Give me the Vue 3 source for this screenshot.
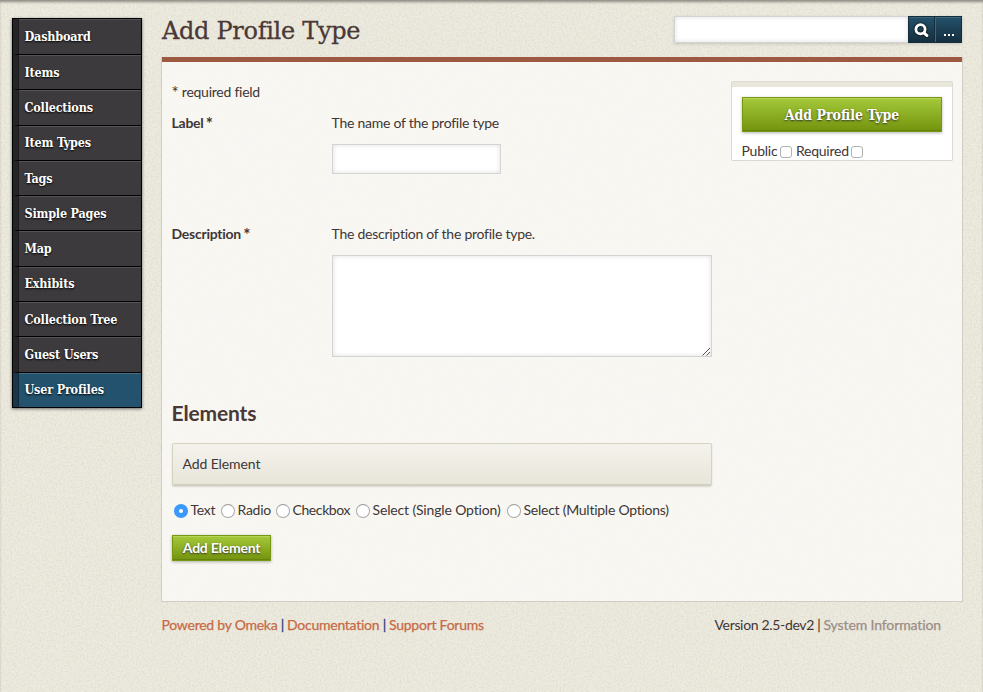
<script setup>
import { ref } from 'vue'

const nav = ['Dashboard', 'Items', 'Collections', 'Item Types', 'Tags', 'Simple Pages', 'Map', 'Exhibits', 'Collection Tree', 'Guest Users', 'User Profiles']
const current = 'User Profiles'
const kinds = [
  { label: 'Text', width: 47 },
  { label: 'Radio', width: 55 },
  { label: 'Checkbox', width: 80 },
  { label: 'Select (Single Option)', width: 151 },
  { label: 'Select (Multiple Options)', width: 170 },
]
const kind = ref('Text')
</script>

<template>
  <div class="page">
    <svg class="grain" aria-hidden="true">
      <filter id="paper">
        <feTurbulence type="fractalNoise" baseFrequency="0.55" numOctaves="2" seed="4" />
        <feColorMatrix values="0 0 0 0 0.4  0 0 0 0 0.38  0 0 0 0 0.3  1.6 0 0 0 -0.6" />
      </filter>
      <rect width="100%" height="100%" filter="url(#paper)" />
    </svg>
    <nav class="side">
      <a v-for="n in nav" :key="n" :class="['item', { current: n === current }]"><span>{{ n }}</span></a>
    </nav>
    <div class="main">
      <header class="head">
        <h1>Add Profile Type</h1>
        <form class="search" @submit.prevent>
          <input type="text" class="field query" />
          <button class="sbtn">
            <svg width="15" height="15" viewBox="0 0 15 15">
              <circle cx="6.5" cy="6.2" r="4.6" fill="none" stroke="#fff" stroke-width="2.8" />
              <path d="M10 9.8 L12.9 12.5" stroke="#fff" stroke-width="3" stroke-linecap="round" />
            </svg>
          </button>
          <button class="sbtn more"><i></i><i></i><i></i></button>
        </form>
      </header>
      <section class="content">
        <div class="left">
          <p class="req"><span class="star">*</span> required field</p>
          <div class="row row1">
            <label>Label <span class="star">*</span></label>
            <div>
              <p>The name of the profile type</p>
              <input type="text" class="field name" />
            </div>
          </div>
          <div class="row row2">
            <label class="desc">Description <span class="star">*</span></label>
            <div>
              <p>The description of the profile type.</p>
              <div class="field area">
                <svg width="9" height="9" viewBox="0 0 9 9">
                  <path d="M0.5 8.5 L8 1 M4.5 8.5 L8 5" stroke="#555" stroke-width="1" fill="none" />
                </svg>
              </div>
            </div>
          </div>
          <h2>Elements</h2>
          <div class="bar">Add Element</div>
          <div class="kinds">
            <label v-for="(k, i) in kinds" :key="k.label" :class="'k' + i" :style="{ width: k.width + 'px' }">
              <span :class="['radio', { on: kind === k.label }]" @click="kind = k.label"></span><span>{{ k.label }}</span>
            </label>
          </div>
          <button class="green small">Add Element</button>
        </div>
        <aside class="save">
          <button class="green big">Add Profile Type</button>
          <div class="checks">
            <span class="pub">Public</span><span class="box"></span><span class="rq">Required</span><span class="box"></span>
          </div>
        </aside>
      </section>
      <footer class="foot">
        <div class="links"><a class="f1">Powered by Omeka</a><b>|</b><a class="f2">Documentation</a><b>|</b><a class="f3">Support Forums</a></div>
        <div class="ver"><span class="f4">Version 2.5-dev2</span><b class="red">|</b><a class="f5">System Information</a></div>
      </footer>
    </div>
  </div>
</template>

<style>
body { background: #e9e7da; }
</style>

<style scoped>
* { box-sizing: border-box; }
.page {
  position: relative; display: flex; width: 983px; height: 692px; overflow: hidden;
  background: #edebdf; box-shadow: inset 0 3px 3px -1px rgba(0, 0, 0, .42);
  font: 14px/20px Lato, sans-serif; letter-spacing: -.25px; color: #403636; white-space: nowrap;
}
.grain { position: absolute; left: 0; top: 0; width: 983px; height: 692px; opacity: .25; pointer-events: none; }
p, h1, h2 { margin: 0; }
button { padding: 0; font: inherit; letter-spacing: inherit; }

.side {
  position: relative; width: 130px; height: 390px; margin: 18px 0 0 12px; flex: none;
  display: flex; flex-direction: column; border: 1px solid #000;
  box-shadow: 0 1px 3px rgba(0, 0, 0, .55);
}
.item {
  flex: 1; display: flex; align-items: center; padding: 1px 0 0 6.5px;
  border-left: 5px solid #252427; border-bottom: 1px solid #000;
  background: conic-gradient(#3f3d40 25%, #39373a 0 50%, #3f3d40 0 75%, #39373a 0) 0 0 / 2px 2px;
  box-shadow: inset 1px 0 #1d1c1f, inset 0 1px #555355;
  color: #fff; font: bold 12.5px/20px "DejaVu Serif Condensed", "DejaVu Serif", serif;
  font-stretch: condensed; letter-spacing: -.2px; text-shadow: 0 1px 2px #000;
}
.item:first-child { flex-grow: 1.02; }
.item:last-child { border-bottom: 0; }
.item.current {
  background: conic-gradient(#265671 25%, #214f69 0 50%, #265671 0 75%, #214f69 0) 0 0 / 2px 2px;
  border-left-color: #1b3648; box-shadow: inset 1px 0 #10293a, inset 0 1px #477087;
}

.main { position: relative; margin-left: 19px; width: 802px; }
.head { height: 57px; display: flex; justify-content: space-between; padding: 16px 1px 0 1px; }
h1 {
  font: 24px/30px "DejaVu Serif", serif;
  color: #4a3837; letter-spacing: -.3px; -webkit-text-stroke: .3px #4a3837;
}
.search { display: flex; height: 27px; box-shadow: 0 1px 3px rgba(0, 0, 0, .15); }
.field {
  display: block; background: #fff; border: 1px solid #d4d4d4; border-radius: 0; outline: 0;
  box-shadow: inset 0 0 5px rgba(0, 0, 0, .13);
}
.query { width: 234px; height: 27px; border-right: 0; }
.sbtn {
  width: 27px; height: 27px; display: flex; align-items: center; justify-content: center;
  border: 1px solid #142d3d; background: linear-gradient(#245169, #142f3f);
  box-shadow: inset 0 1px #3a6278;
}
.sbtn svg { margin-top: 1px; filter: drop-shadow(0 0 1px #000); }
.more { gap: 2px; padding: 10px 0 0 1px; border-left: 0; box-shadow: inset 1px 1px #3f677c; }
.more i { width: 2px; height: 2px; background: #fff; }

.content {
  height: 545px; border: 1px solid #cfcdc4; border-top: 0; margin-right: 0;
  background: linear-gradient(#9d5a40, #9d5a40) 0 0 / 100% 5px no-repeat, rgba(249, 248, 245, .88);
  display: flex; justify-content: space-between; padding: 5px 9px 0 9px;
}
.left { width: 541px; display: flex; flex-direction: column; padding-left: 1px; }
.req { margin: 20px 0 0 -.5px; }
.star { font-size: 17px; line-height: 14px; vertical-align: -2px; }
.row { display: grid; grid-template-columns: 160px 1fr; }
.row label { font-weight: bold; margin-left: -.5px; }
.row label .star { margin-left: -1px; }
.row p { margin-left: -.5px; }
.row1 { margin-top: 11px; height: 111px; }
.name { width: 169px; height: 30px; margin-top: 11px; }
.area { display: flex; width: 380px; height: 102px; margin-top: 11px; align-items: flex-end; justify-content: flex-end; }
.row2 { height: 133px; }
h2 { margin: 42px 0 0 -.5px; font: bold 21px/28px Lato, sans-serif; color: #4a3837; letter-spacing: -.15px; }
.bar {
  width: 540px; height: 43px; margin-top: 16px; padding-left: 9.5px; line-height: 40px; letter-spacing: -.1px;
  border: 1px solid #d6d3bf; border-bottom: 2px solid #d1cfbd; border-radius: 2px;
  background: linear-gradient(#f4f2ec, #e8e6da); box-shadow: 0 1px 2px rgba(0, 0, 0, .13);
}
.kinds { display: flex; margin-top: 14px; padding-left: 2px; height: 20px; }
.kinds label { display: flex; align-items: center; gap: 2.5px; flex: none; }
.k2 { letter-spacing: -.4px; }
.k3 { letter-spacing: -.15px; }
.radio {
  width: 14px; height: 14px; margin-top: 2px; flex: none; border-radius: 50%;
  border: 1px solid #aaa; border-top-color: #999; background: #fff;
}
.radio.on { border: 5px solid #3b99fc; }
.green {
  border: 1px solid #769614; background: linear-gradient(#a4c93a, #73930c); color: #fff;
  box-shadow: inset 0 1px #b8d458, inset 0 -1px #64840c, 0 1px 3px rgba(0, 0, 0, .3);
  text-shadow: 0 1px 2px #333; font-weight: bold;
}
.small { width: 99px; height: 26px; margin-top: 15px; }
.save {
  width: 222px; height: 80px; margin: 19px 0 0; padding: 10px 10px 0; border: 1px solid #dad9d5;
  border-radius: 2px; background: #fff; border-top: 0;
  box-shadow: inset 0 1px #deddd3, inset 0 6px #e9e7da;
}
.big {
  display: block; width: 200px; height: 35px; margin-top: 6px; letter-spacing: 0;
  font: bold 14px/30px "DejaVu Serif Condensed", "DejaVu Serif", serif; font-stretch: condensed;
}
.checks { display: flex; align-items: center; margin: 9px 0 0 -.5px; height: 20px; }
.pub { width: 38.5px; }
.rq { width: 55px; }
.box { width: 12px; height: 12px; margin: 2px 4px 0 0; border: 1px solid #b0b0b0; border-radius: 3px; background: #fff; }

.foot { display: flex; justify-content: space-between; padding: 13px 21.5px 0 .5px; }
.foot b { display: inline-block; width: 9px; text-align: center; font-weight: normal; color: #333b7c; -webkit-text-stroke: .3px; }
.foot b.red { color: #7c4a34; }
.links, .ver { display: flex; }
.links a { color: #c76a45; -webkit-text-stroke: .25px #c76a45; }
.f1 { width: 116.5px; } .f2 { width: 93px; } .f4 { width: 100px; letter-spacing: -.33px; }
.f5 { width: 118px; letter-spacing: -.12px; color: #9c8d87; -webkit-text-stroke: .25px #9c8d87; }
</style>
